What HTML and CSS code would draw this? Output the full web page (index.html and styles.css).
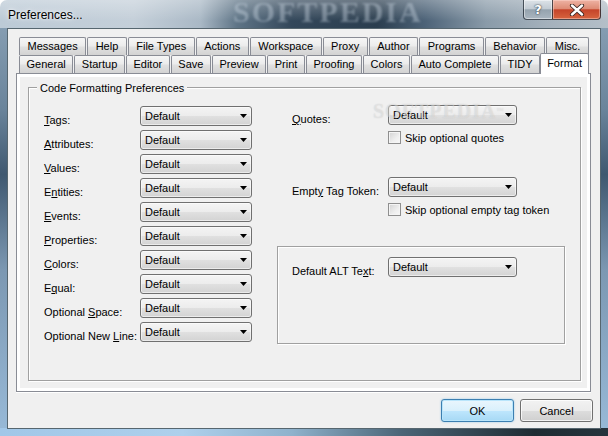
FILE: index.html
```html
<!DOCTYPE html>
<html>
<head>
<meta charset="utf-8">
<title>Preferences...</title>
<link rel="stylesheet" href="styles.css">
</head>
<body>
<div class="window">
  <div class="titlebar">
    <span class="title">Preferences...</span>
    <span class="bgmark">SOFTPEDIA</span>
    <div class="caption">
      <div class="cbtn help">?</div>
      <div class="cbtn close">
        <svg width="16" height="12" viewBox="0 0 16 12"><path d="M3 1.5 L13 10.5 M13 1.5 L3 10.5" stroke="#3a2420" stroke-width="4.2" stroke-linecap="round"/><path d="M3 1.5 L13 10.5 M13 1.5 L3 10.5" stroke="#fff" stroke-width="2.4" stroke-linecap="round"/></svg>
      </div>
    </div>
  </div>
  <div class="client">
    <div class="tabs">
      <div class="tabrow">
        <div class="tab">Messages</div>
        <div class="tab">Help</div>
        <div class="tab">File Types</div>
        <div class="tab">Actions</div>
        <div class="tab">Workspace</div>
        <div class="tab">Proxy</div>
        <div class="tab">Author</div>
        <div class="tab">Programs</div>
        <div class="tab">Behavior</div>
        <div class="tab">Misc.</div>
      </div>
      <div class="tabrow">
        <div class="tab">General</div>
        <div class="tab">Startup</div>
        <div class="tab">Editor</div>
        <div class="tab">Save</div>
        <div class="tab">Preview</div>
        <div class="tab">Print</div>
        <div class="tab">Proofing</div>
        <div class="tab">Colors</div>
        <div class="tab">Auto Complete</div>
        <div class="tab">TIDY</div>
        <div class="tab sel">Format</div>
      </div>
    </div>
    <div class="panel">
      <div class="group">
        <span class="legend">Code Formatting Preferences</span>
        <div class="cols">
          <div class="formgrid">
            <div class="lbl"><u>T</u>ags:</div><div class="combo">Default</div>
            <div class="lbl"><u>A</u>ttributes:</div><div class="combo">Default</div>
            <div class="lbl"><u>V</u>alues:</div><div class="combo">Default</div>
            <div class="lbl">E<u>n</u>tities:</div><div class="combo">Default</div>
            <div class="lbl"><u>E</u>vents:</div><div class="combo">Default</div>
            <div class="lbl"><u>P</u>roperties:</div><div class="combo">Default</div>
            <div class="lbl"><u>C</u>olors:</div><div class="combo">Default</div>
            <div class="lbl">E<u>q</u>ual:</div><div class="combo">Default</div>
            <div class="lbl">Optional <u>S</u>pace:</div><div class="combo">Default</div>
            <div class="lbl">Optional New <u>L</u>ine:</div><div class="combo">Default</div>
          </div>
          <div class="rcol">
            <div class="rrow">
              <div class="lbl rl"><u>Q</u>uotes:</div><div class="combo wide">Default</div>
            </div>
            <div class="check"><span class="box"></span><span>Skip optional quotes</span></div>
            <div class="rrow gap2">
              <div class="lbl rl">Empt<u>y</u> Tag Token:</div><div class="combo wide">Default</div>
            </div>
            <div class="check"><span class="box"></span><span>Skip optional empty tag token</span></div>
            <div class="inner">
              <div class="rrow flat">
                <div class="lbl rl">Default ALT Te<u>x</u>t:</div><div class="combo wide">Default</div>
              </div>
            </div>
            <span class="wm">SOFTPEDIA<sup>™</sup></span>
          </div>
        </div>
      </div>
    </div>
    <div class="buttons">
      <button class="btn default">OK</button>
      <button class="btn">Cancel</button>
    </div>
  </div>
</div>
</body>
</html>
```

FILE: styles.css
```css
* { box-sizing: border-box; }
html, body { margin: 0; padding: 0; background: #ffffff; }
body {
  width: 608px;
  height: 436px;
  overflow: hidden;
  font-family: "Liberation Sans", Arial, sans-serif;
  font-size: 11px;
  color: #000;
}

.window {
  width: 608px;
  height: 436px;
  display: flex;
  flex-direction: column;
  padding: 0 7px 7px 7px;
  border-radius: 7px 7px 0 0;
  overflow: hidden;
  background:
    linear-gradient(90deg, #a1c7e8 0%, #aed0ec 30%, #8fb2cc 48%, #4b6577 66%, #1e2b32 88%, #26343d 100%) left bottom / 100% 8px no-repeat,
    linear-gradient(180deg, rgba(255,255,255,.30) 0%, rgba(255,255,255,0) 75%) left top / 100% 28px no-repeat,
    linear-gradient(90deg, #bccad6 0%, #c4cfd9 22%, #a9b8c5 33%, #5e7486 39%, #33475a 48%, #2b3e4f 62%, #4d6378 70%, #8a9ba9 80%, #a4b1bc 90%, #b4bfc8 100%) left top / 100% 28px no-repeat,
    linear-gradient(180deg, #8ea5b9 0%, #6a849b 25%, #3f5870 40%, #7c98b2 62%, #98bad8 100%);
}

/* title bar */
.titlebar {
  position: relative;
  height: 28px;
  flex: none;
  display: flex;
  align-items: flex-start;
}
.title {
  margin: 7px 0 0 1px;
  font-size: 12px;
  line-height: 16px;
  color: #000;
  text-shadow: 0 0 6px rgba(255,255,255,.9), 0 0 3px rgba(255,255,255,.8);
  position: relative;
  z-index: 1;
}
.bgmark {
  position: absolute;
  left: 226px;
  top: -5px;
  font-family: "Liberation Serif", serif;
  font-weight: bold;
  font-size: 30px;
  letter-spacing: 2px;
  color: rgba(200, 212, 224, .42);
  filter: blur(1.3px);
  pointer-events: none;
}
.caption {
  margin-left: auto;
  display: flex;
  height: 20px;
  position: relative;
  z-index: 1;
}
.cbtn {
  height: 20px;
  display: flex;
  align-items: center;
  justify-content: center;
  border: 1px solid rgba(35, 45, 55, .8);
  border-top: none;
}
.help {
  width: 29px;
  border-right: none;
  border-radius: 0 0 0 4px;
  background: linear-gradient(180deg, #dde3e8 0%, #c3ccd4 45%, #95a3ae 52%, #aab6c0 100%);
  box-shadow: inset 0 0 0 1px rgba(255,255,255,.45);
  font-family: "DejaVu Sans", sans-serif;
  font-weight: bold;
  font-size: 13px;
  color: #fff;
  text-shadow: 0 0 2px #2e3a44, 0 0 1px #2e3a44;
}
.close {
  width: 49px;
  border-radius: 0 0 4px 0;
  background: linear-gradient(180deg, #eeb3a4 0%, #de8c76 45%, #c5442a 52%, #d7643f 100%);
  box-shadow: inset 0 0 0 1px rgba(255,220,210,.45);
}

/* client area */
.client {
  height: 401px;
  flex: none;
  border: 1px solid #56666f;
  background: #f0f0f0;
  padding: 8px 0 0 8px;
}

.tabs { margin-left: 3px; width: 570px; }
.tabrow {
  display: flex;
  height: 18px;
}
.tab {
  flex: 1 1 auto;
  padding: 0 6px;
  margin-right: 1px;
  border: 1px solid #898c95;
  border-bottom: none;
  border-radius: 2px 2px 0 0;
  background: linear-gradient(180deg, #f6f6f6 0%, #ececec 45%, #dfdfdf 55%, #d3d3d3 100%);
  text-align: center;
  line-height: 17px;
  white-space: nowrap;
}
.tabrow .tab:last-child { margin-right: 0; }
.tab.sel {
  flex: 0 0 49px;
  height: 21px;
  margin: -2px -2px 0 -1px;
  padding: 0;
  position: relative;
  z-index: 2;
  background: #ffffff;
  line-height: 18px;
}

.panel {
  width: 575px;
  height: 319px;
  border: 1px solid #898c95;
  background: #f0f0f0;
  box-shadow: inset 0 0 0 3px #ffffff, 0 1px 0 #ffffff;
  padding: 13px 0 0 11px;
}

.group {
  position: relative;
  width: 553px;
  height: 294px;
  border: 1px solid #a0a0a0;
  box-shadow: inset 1px 1px 0 #ffffff, 1px 1px 0 #ffffff;
  padding: 17px 0 0 15px;
}
.legend {
  position: absolute;
  top: -6px;
  left: 8px;
  padding: 0 3px;
  background: #f0f0f0;
  line-height: 13px;
  white-space: nowrap;
}

.cols {
  display: flex;
  align-items: flex-start;
}
.formgrid {
  display: grid;
  grid-template-columns: 96px 112px;
  grid-auto-rows: 20px;
  row-gap: 4px;
  margin-top: 1px;
}
.lbl {
  line-height: 13px;
  padding-top: 8px;
  white-space: nowrap;
}
.lbl u { text-underline-offset: 1px; }

.combo {
  position: relative;
  width: 112px;
  height: 20px;
  border: 1px solid #707070;
  border-radius: 3px;
  background: linear-gradient(180deg, #f4f4f4 0%, #ececec 50%, #e0e0e0 52%, #d3d3d3 100%);
  box-shadow: inset 0 0 0 1px rgba(255,255,255,.55);
  line-height: 18px;
  padding-left: 4px;
}
.combo::after {
  content: "";
  position: absolute;
  right: 4px;
  top: 7px;
  width: 7px;
  height: 4px;
  background: #000;
  clip-path: polygon(0 0, 100% 0, 50% 100%);
}
.combo.wide { width: 129px; }

.rcol {
  position: relative;
  width: 288px;
  margin-left: 25px;
}
.rrow {
  display: flex;
  height: 20px;
  padding-left: 15px;
}
.rrow.flat { padding-left: 0; }
.rl { width: 96px; flex: none; }
.rrow.gap2 { margin-top: 33px; }
.check {
  display: flex;
  align-items: center;
  gap: 4px;
  height: 13px;
  margin: 6px 0 0 111px;
  white-space: nowrap;
}
.box {
  width: 13px;
  height: 13px;
  flex: none;
  border: 1px solid #8f8f8f;
  background: linear-gradient(135deg, #d2d2d2 0%, #eeeeee 60%, #f8f8f8 100%);
  box-shadow: inset 0 0 0 1px #f4f4f4;
}
.inner {
  margin-top: 30px;
  height: 98px;
  border: 1px solid #a0a0a0;
  box-shadow: inset 1px 1px 0 #ffffff, 1px 1px 0 #ffffff;
  padding: 10px 0 0 14px;
}
.wm {
  position: absolute;
  left: 96px;
  top: -4px;
  font-family: "Liberation Serif", serif;
  font-weight: bold;
  font-size: 20px;
  line-height: 20px;
  letter-spacing: 1px;
  color: rgba(255,255,255,.35);
  text-shadow: 0 0 1px rgba(140,140,140,.35);
  pointer-events: none;
}
.wm sup { font-size: 7px; vertical-align: top; }

.buttons {
  display: flex;
  justify-content: flex-end;
  gap: 6px;
  margin-top: 7px;
  padding-right: 7px;
}
.btn {
  width: 73px;
  height: 23px;
  padding: 0;
  font-family: "Liberation Sans", Arial, sans-serif;
  font-size: 11px;
  color: #000;
  border: 1px solid #707070;
  border-radius: 3px;
  background: linear-gradient(180deg, #f2f2f2 0%, #ebebeb 50%, #dddddd 52%, #cfcfcf 100%);
  box-shadow: inset 0 0 0 1px rgba(255,255,255,.75);
}
.btn.default {
  border-color: #3c7fb1;
  background: linear-gradient(180deg, #eaf6fd 0%, #d9f0fc 50%, #bee6fd 52%, #a7d9f5 100%);
  box-shadow: inset 0 0 0 1px #b9e5fb, 0 0 2px rgba(80,170,230,.6);
}
```
